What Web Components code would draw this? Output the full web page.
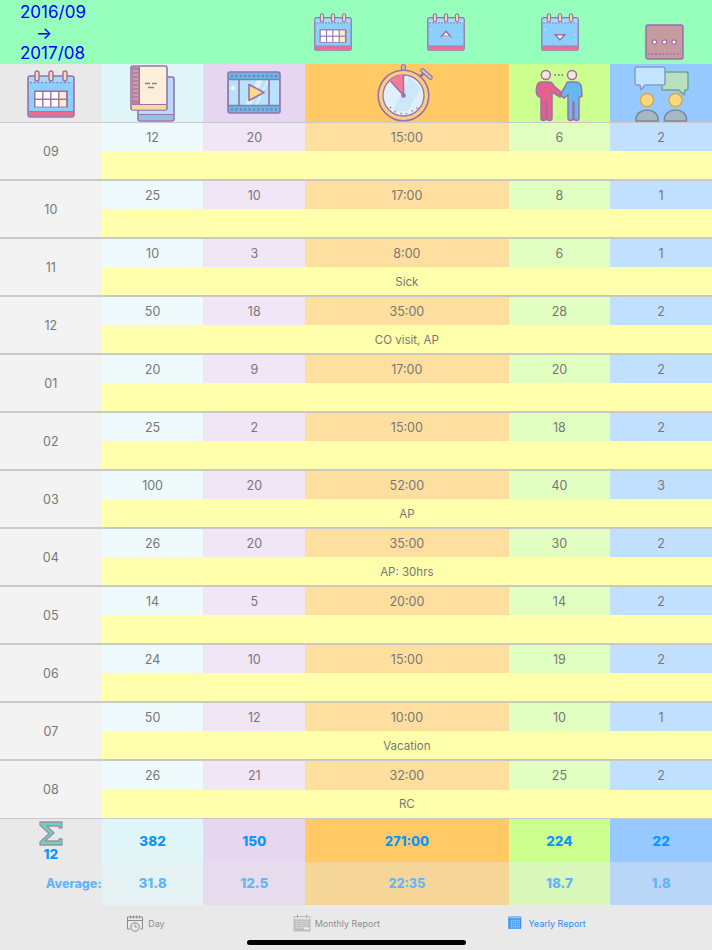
<!DOCTYPE html>
<html lang="en">
<head>
<meta charset="utf-8">
<title>Yearly Report</title>
<style>
  html, body { margin: 0; padding: 0; background: #e9e9e9; }
  body { width: 712px; height: 950px; overflow: hidden; font-family: Inter, "Liberation Sans", sans-serif; }
</style>
</head>
<body>
<yr-report>
  <yr-header from="2016/09" to="2017/08"></yr-header>
  <yr-icon-row></yr-icon-row>
  <yr-month month="09" values="12,20,15:00,6,2"></yr-month>
  <yr-month month="10" values="25,10,17:00,8,1"></yr-month>
  <yr-month month="11" values="10,3,8:00,6,1">Sick</yr-month>
  <yr-month month="12" values="50,18,35:00,28,2">CO visit, AP</yr-month>
  <yr-month month="01" values="20,9,17:00,20,2"></yr-month>
  <yr-month month="02" values="25,2,15:00,18,2"></yr-month>
  <yr-month month="03" values="100,20,52:00,40,3">AP</yr-month>
  <yr-month month="04" values="26,20,35:00,30,2">AP: 30hrs</yr-month>
  <yr-month month="05" values="14,5,20:00,14,2"></yr-month>
  <yr-month month="06" values="24,10,15:00,19,2"></yr-month>
  <yr-month month="07" values="50,12,10:00,10,1">Vacation</yr-month>
  <yr-month month="08" values="26,21,32:00,25,2" last>RC</yr-month>
  <yr-totals count="12" sums="382,150,271:00,224,22" averages="31.8,12.5,22:35,18.7,1.8"></yr-totals>
  <yr-tabbar>
    <yr-tab icon="tab-day">Day</yr-tab>
    <yr-tab icon="tab-month">Monthly Report</yr-tab>
    <yr-tab icon="tab-year" active>Yearly Report</yr-tab>
  </yr-tabbar>
</yr-report>

<script>
const P = "#9a71a8"; // the purple outline all icons share

function calendar(inner) {
  return `<svg viewBox="0 0 48 48">
    <rect x="1" y="6" width="46" height="41" rx="2.5" fill="#8ccffb" stroke="${P}" stroke-width="1.6"/>
    <rect x="2" y="7" width="44" height="5" fill="#a4dbfc"/>
    <path d="M3 12.5H45" stroke="${P}" stroke-width="1.6" stroke-dasharray="1.6 2.2"/>
    <rect x="2" y="42" width="44" height="4.2" fill="#ee6a8e"/>
    <path d="M2 41.6H46" stroke="${P}" stroke-width="1"/>
    ${[8, 22, 36].map((x) => `<rect x="${x}" y="1" width="4" height="10" rx="2" fill="#f8d9a8" stroke="${P}" stroke-width="1.4"/>`).join("")}
    <path d="M5 20l1 1-1 1-1-1zM43 26l1 1-1 1-1-1z" fill="#c6e9fd"/>
    ${inner}
  </svg>`;
}

const gridCells = [0, 1, 2, 3].flatMap((c) => [0, 1].map((r) =>
  `<rect x="${8.5 + c * 8}" y="${22 + r * 8}" width="6.6" height="6.6" fill="${c === 3 ? "#fbeccb" : "#fff"}"/>`
)).join("");

const ICONS = {
  calendar: calendar(`<rect x="7" y="20.5" width="34" height="17" fill="${P}"/>${gridCells}`),
  up: calendar(`<path d="M24 23l5.5 6.5h-11z" fill="#fff" stroke="${P}" stroke-width="2"/><path d="M19 29.5h10v1.5H19z" fill="#f4c7cf"/>`),
  down: calendar(`<path d="M18 27.5h12l-6 6.5z" fill="#fff" stroke="${P}" stroke-width="2"/>`),
  dots: `<svg viewBox="0 0 39 36">
    <rect x="1" y="1" width="37" height="34" rx="2" fill="#c79a9f" stroke="${P}" stroke-width="1.5"/>
    <path d="M3 30H36" stroke="${P}" stroke-width="1.6" stroke-dasharray="1.6 2"/>
    ${[9.5, 19.5, 29].map((x) => `<circle cx="${x}" cy="18" r="2.2" fill="#fff" stroke="${P}" stroke-width="1.2"/>`).join("")}
  </svg>`,
  book: `<svg viewBox="0 0 45 57">
    <rect x="8" y="12" width="36" height="44" rx="2" fill="#b7dcf8" stroke="${P}" stroke-width="1.6"/>
    <rect x="9" y="50" width="34" height="5" fill="#94c1e4"/>
    <path d="M9 49.5H43" stroke="${P}"/>
    <rect x="1" y="1" width="36" height="44" rx="2" fill="#fcefda" stroke="${P}" stroke-width="1.6"/>
    <rect x="2" y="40" width="34" height="4.5" fill="#f6d7a2"/>
    <path d="M2 39.5H36" stroke="${P}"/>
    <path d="M2 2H9V39.5H2z" fill="#b3849e"/>
    <path d="M3 6H8M3 10H8M3 14H8M3 18H8M3 22H8M3 26H8M3 30H8M3 34H8" stroke="#d8b7c0" stroke-width="1.2"/>
    <path d="M9.5 2V39.5" stroke="${P}"/>
    <path d="M15 18.5H20M22 18.5H27M18 22.5H24" stroke="${P}" stroke-width="1.3"/>
  </svg>`,
  film: `<svg viewBox="0 0 54 43">
    <rect x="1" y="1" width="52" height="41" rx="2" fill="#58c0ec" stroke="${P}" stroke-width="1.6"/>
    <rect x="2" y="9" width="50" height="25" fill="#b6e3fb"/>
    <path d="M18 34L30 9h6L24 34zM28 34L40 9h2L30 34z" fill="#dcf2fe"/>
    <path d="M2 8.500H52M2 34.500H52M12 9V34M42 9V34" stroke="${P}" stroke-width="1.6"/>
    <path d="M4 5H50M4 38.500H50" stroke="${P}" stroke-width="2.4" stroke-dasharray="2 2.4"/>
    <path d="M22 13.500L37 21.500L22 29.500z" fill="#fbd88a" stroke="${P}" stroke-width="1.6" stroke-linejoin="round"/>
    <path d="M6 14l1 2 2 1-2 1-1 2-1-2-2-1 2-1z" fill="#fff"/>
  </svg>`,
  stopwatch: `<svg viewBox="0 0 56 58">
    <rect x="24.5" y="0.8" width="4" height="7" rx="1.5" fill="#b9c6cc" stroke="${P}" stroke-width="1.3"/>
    <path d="M42 13.500L46.500 9.500" stroke="${P}" stroke-width="3"/>
    <path d="M45.500 6.500L53.500 13.500" stroke="${P}" stroke-width="4.6" stroke-linecap="round"/>
    <path d="M45.500 6.500L53.500 13.500" stroke="#c3ced3" stroke-width="2.2" stroke-linecap="round"/>
    <circle cx="26.5" cy="31.5" r="25.3" fill="#f8cf82" stroke="${P}" stroke-width="1.6"/>
    <circle cx="26.5" cy="31.5" r="20.5" fill="#dff0fc" stroke="${P}" stroke-width="1.3"/>
    <path d="M32 13L44 24 30 47 16 47z" fill="#c8e3f6" opacity=".8"/>
    <path d="M26.5 31.5V11C20.5 11 16 13.5 13 16.5z" fill="#f5799a"/>
    <path d="M26.5 31.5V11M26.5 31.5L13.5 17" stroke="${P}" stroke-width="1.5"/>
    <circle cx="26.5" cy="31.5" r="2.2" fill="${P}"/>
    <path d="M13 43l1 1M18 47l.5 1.2M24 49v1.3M29.5 49v1.3M35 47.5l.5-1.2M40.5 43.5l-1 1" stroke="${P}" stroke-width="1.5"/>
  </svg>`,
  people: `<svg viewBox="0 0 48 54">
    <circle cx="10.8" cy="7" r="4.5" fill="#fae6d6" stroke="${P}" stroke-width="1.5"/>
    <circle cx="37" cy="7" r="4.5" fill="#fae6d6" stroke="${P}" stroke-width="1.5"/>
    <path d="M19.5 7H28.500" stroke="${P}" stroke-width="2" stroke-dasharray="1.5 2"/>
    <path d="M33 14H41C44 14 46 16 46.5 20L47 28L44 30V50A2.5 2.5 0 0 1 39 50V34H38V50A2.5 2.5 0 0 1 33 50V27L29 30L25 27L31 17C31.500 15 32 14 33 14Z" fill="#67b7f0" stroke="${P}" stroke-width="1.5"/>
    <path d="M6 14H14C17 14 18 16 19 18L27 25L25 29L17 24V50A2.5 2.5 0 0 1 12 50V34H11V50A2.5 2.5 0 0 1 6 50V30L3 28C1 26 1 24 1.5 20C2 16 4 14 6 14Z" fill="#e5608a" stroke="${P}" stroke-width="1.5"/>
  </svg>`,
  chat: `<svg viewBox="0 0 56 56">
    <path d="M28 6H52A2 2 0 0 1 54 8V22A2 2 0 0 1 52 24H51L50 29L45 24H28z" fill="#b9dfc0" stroke="#6ea58b" stroke-width="1.5" stroke-linejoin="round"/>
    <path d="M3 1H29A2 2 0 0 1 31 3V17A2 2 0 0 1 29 19H11L7 24L6 19H3A2 2 0 0 1 1 17V3A2 2 0 0 1 3 1Z" fill="#c4e5fd" stroke="#7f9ecb" stroke-width="1.5" stroke-linejoin="round"/>
    <circle cx="13" cy="34" r="6.6" fill="#fbd97a" stroke="#d6a94f" stroke-width="1.5"/>
    <circle cx="41.5" cy="34" r="6.6" fill="#fbd97a" stroke="#d6a94f" stroke-width="1.5"/>
    <path d="M2 55V53A11 9 0 0 1 24 53V55z" fill="#a9b6c4" stroke="#76889c" stroke-width="1.5"/>
    <path d="M30.5 55V53A11 9 0 0 1 52.5 53V55z" fill="#a9b6c4" stroke="#76889c" stroke-width="1.5"/>
  </svg>`,
  sigma: `<svg viewBox="0 0 24 25">
    <path d="M1 1H23V7H20V5H8L15 12L6 20H20V18H23V24H1V21L10 12.5L1 4z" fill="#6fd3b0" stroke="#9a8db0" stroke-width="1.3" stroke-linejoin="round"/>
  </svg>`,
  "tab-day": `<svg viewBox="0 0 18 18" fill="none" stroke="#8b8b8b" stroke-width="1">
    <path d="M4 15H1.500V3H16.500V15H14.500M1.500 6.500H16.500" />
    <path d="M4.500 1.500V4.500M7.500 1.500V4.500M10.500 1.500V4.500M13.500 1.500V4.500" />
    <circle cx="9" cy="13" r="4.2" fill="#e9e9e9"/>
    <path d="M9 10.500V13H11"/>
  </svg>`,
  "tab-month": `<svg viewBox="0 0 18 18">
    <rect x="0.5" y="2" width="17" height="15.5" rx="1" fill="#bdbdbd"/>
    <rect x="1.5" y="3" width="15" height="2.5" fill="#e4e4e4"/>
    <path d="M4.500 .5V3.500M13.500 .5V3.500" stroke="#a5a5a5"/>
    <path d="M2 7.500H16M2 9.500H16M2 11.500H16M2 13.500H16M3.500 6.500V15M6 6.500V15M8.500 6.500V15M11 6.500V15M13.500 6.500V15" stroke="#d6d6d6" stroke-width=".6"/>
    <rect x="11" y="13.5" width="5" height="2" fill="#efefef"/>
  </svg>`,
  "tab-year": `<svg viewBox="0 0 14 14">
    <rect x="0.3" y="0.5" width="13.4" height="13" rx="1" fill="#2f8ef0"/>
    <rect x="1" y="1" width="12" height="1.5" fill="#8cc4fa"/>
    <path d="M1.500 4.500H12.500M1.500 6.500H12.500M1.500 8.500H12.500M1.500 10.500H12.500M1.500 12.500H12.500M3.500 3.500V13M5.500 3.500V13M7.500 3.500V13M9.500 3.500V13M11.500 3.500V13" stroke="#b7d9fb" stroke-width=".5"/>
  </svg>`,
};

class YrIcon extends HTMLElement {
  connectedCallback() {
    if (this.shadowRoot) return;
    const root = this.attachShadow({ mode: "open" });
    root.innerHTML = `<style>
      :host { display: block; flex: none; width: var(--w, 38px); height: var(--h, 38px); }
      svg { display: block; width: 100%; height: 100%; overflow: visible; }
    </style>${ICONS[this.getAttribute("name")]}`;
  }
}

class YrReport extends HTMLElement {
  constructor() {
    super();
    this.attachShadow({ mode: "open" }).innerHTML = `<style>
      :host { display: flex; flex-direction: column; width: 712px; height: 950px; position: relative; }
      .home { position: absolute; left: 247px; top: 940px; width: 219px; height: 4.5px; border-radius: 3px; background: #000; }
    </style><slot></slot><div class="home"></div>`;
  }
}

class YrHeader extends HTMLElement {
  connectedCallback() {
    if (this.shadowRoot) return;
    const icon = (name, cls) => `<yr-icon class="${cls}" name="${name}"></yr-icon>`;
    this.attachShadow({ mode: "open" }).innerHTML = `<style>
      :host { display: flex; align-items: flex-start; height: 64px; background: #96ffbc; }
      .range { width: 294px; box-sizing: border-box; padding: 2px 0 0 20px; flex: none; color: #0000ff; font-size: 17px; line-height: 20.5px; white-space: nowrap; }
      .arrow { padding-left: 16px; }
      .arrow, .date { display: block; }
      yr-icon { margin-top: 13px; --w: 38px; --h: 38px; }
      .a { margin-left: 20px; }
      .b { margin-left: 75px; }
      .c { margin-left: 76px; }
      .d { margin-left: 66px; margin-top: 24px; --w: 39px; --h: 36px; }
    </style>
    <div class="range"><span class="date">${this.getAttribute("from")}</span><span class="arrow">→</span><span class="date">${this.getAttribute("to")}</span></div>
    ${icon("calendar", "a")}${icon("up", "b")}${icon("down", "c")}${icon("dots", "d")}`;
  }
}

// columns are seven equal parts, the time column takes two
const COLS = "grid-template-columns: repeat(3, 1fr) 2fr repeat(2, 1fr);";

class YrIconRow extends HTMLElement {
  constructor() {
    super();
    this.attachShadow({ mode: "open" }).innerHTML = `<style>
      :host { display: grid; ${COLS} height: 59px; box-sizing: border-box; border-bottom: 1px solid #c9c9c9; }
      div { display: flex; justify-content: center; align-items: center; height: 58px; }
      .cal { background: #e9e9e9; } .cal yr-icon { --w: 48px; --h: 48px; margin-top: 2px; }
      .book { background: #e0f5f7; } .book yr-icon { --w: 45px; --h: 57px; }
      .film { background: #e6d6ef; } .film yr-icon { --w: 54px; --h: 43px; margin-top: -1px; }
      .time { background: #ffc966; } .time yr-icon { --w: 56px; --h: 58px; margin-left: -3px; }
      .people { background: #ccff90; } .people yr-icon { --w: 48px; --h: 54px; margin-top: 4px; }
      .chat { background: #96c9ff; } .chat yr-icon { --w: 56px; --h: 56px; margin-top: 1px; margin-left: 2px; }
    </style>
    <div class="cal"><yr-icon name="calendar"></yr-icon></div>
    <div class="book"><yr-icon name="book"></yr-icon></div>
    <div class="film"><yr-icon name="film"></yr-icon></div>
    <div class="time"><yr-icon name="stopwatch"></yr-icon></div>
    <div class="people"><yr-icon name="people"></yr-icon></div>
    <div class="chat"><yr-icon name="chat"></yr-icon></div>`;
  }
}

class YrMonth extends HTMLElement {
  connectedCallback() {
    if (this.shadowRoot) return;
    const values = this.getAttribute("values").split(",");
    this.attachShadow({ mode: "open" }).innerHTML = `<style>
      :host { display: grid; ${COLS} grid-template-rows: 28px 28px; height: 58px; box-sizing: border-box; border-bottom: 2px solid #c9c9c9; color: #777; font-size: 12.5px; }
      :host([last]) { grid-template-rows: 28.5px 28.5px; border-bottom-width: 1px; }
      div { display: flex; justify-content: center; align-items: center; }
      .month { grid-row: 1 / 3; background: #f3f3f3; }
      .c0 { background: #eefafc; } .c1 { background: #f1e6f6; } .c2 { background: #ffdf9f; }
      .c3 { background: #e0ffc1; } .c4 { background: #c1e0ff; }
      .note { grid-column: 2 / 7; background: #ffffac; font-size: 11.5px; padding-top: 1px; box-sizing: border-box; }
    </style>
    <div class="month">${this.getAttribute("month")}</div>
    ${values.map((v, i) => `<div class="c${i}">${v}</div>`).join("")}
    <div class="note"><slot></slot></div>`;
  }
}

class YrTotals extends HTMLElement {
  connectedCallback() {
    if (this.shadowRoot) return;
    const sums = this.getAttribute("sums").split(",");
    const averages = this.getAttribute("averages").split(",");
    this.attachShadow({ mode: "open" }).innerHTML = `<style>
      :host { display: grid; ${COLS} grid-template-rows: 43px 42.5px; font-weight: 800; font-size: 13.5px; color: #0a95ff; }
      div { display: flex; justify-content: center; align-items: center; }
      .count { flex-direction: column; justify-content: flex-start; background: #e9e9e9; }
      .count yr-icon { --w: 24px; --h: 25px; margin-top: 1.5px; }
      .count span { line-height: 17px; }
      .label { justify-content: flex-end; background: #e9e9e9; font-size: 12.5px; }
      .avg { color: #5fb6fb; }
      .s2 { font-size: 13px; } .a2 { font-size: 12.5px; }
      .s0 { background: #e0f5f7; } .s1 { background: #e6d6ef; } .s2 { background: #ffc966; }
      .s3 { background: #ccff90; } .s4 { background: #96c9ff; }
      .a0 { background: #e4f2f4; } .a1 { background: #e7dcee; } .a2 { background: #f5d698; }
      .a3 { background: #d9f7b9; } .a4 { background: #b9d6f7; }
    </style>
    <div class="count"><yr-icon name="sigma"></yr-icon><span>${this.getAttribute("count")}</span></div>
    ${sums.map((v, i) => `<div class="s${i}">${v}</div>`).join("")}
    <div class="label avg">Average:</div>
    ${averages.map((v, i) => `<div class="avg a${i}">${v}</div>`).join("")}`;
  }
}

class YrTabbar extends HTMLElement {
  constructor() {
    super();
    this.attachShadow({ mode: "open" }).innerHTML = `<style>
      :host { display: flex; justify-content: center; gap: 128px; flex: 1; padding-top: 9px; box-sizing: border-box; background: #e9e9e9; }
    </style><slot></slot>`;
  }
}

class YrTab extends HTMLElement {
  connectedCallback() {
    if (this.shadowRoot) return;
    this.attachShadow({ mode: "open" }).innerHTML = `<style>
      :host { display: flex; align-items: center; gap: 4px; height: 19px; color: #8e8e8e; font-size: 9px; }
      :host([active]) { color: #2f8ef0; gap: 7px; }
      yr-icon { --w: 18px; --h: 18px; }
      :host([active]) yr-icon { --w: 13.5px; --h: 13.5px; }
    </style><yr-icon name="${this.getAttribute("icon")}"></yr-icon><slot></slot>`;
  }
}

customElements.define("yr-icon", YrIcon);
customElements.define("yr-report", YrReport);
customElements.define("yr-header", YrHeader);
customElements.define("yr-icon-row", YrIconRow);
customElements.define("yr-month", YrMonth);
customElements.define("yr-totals", YrTotals);
customElements.define("yr-tabbar", YrTabbar);
customElements.define("yr-tab", YrTab);
</script>
</body>
</html>
